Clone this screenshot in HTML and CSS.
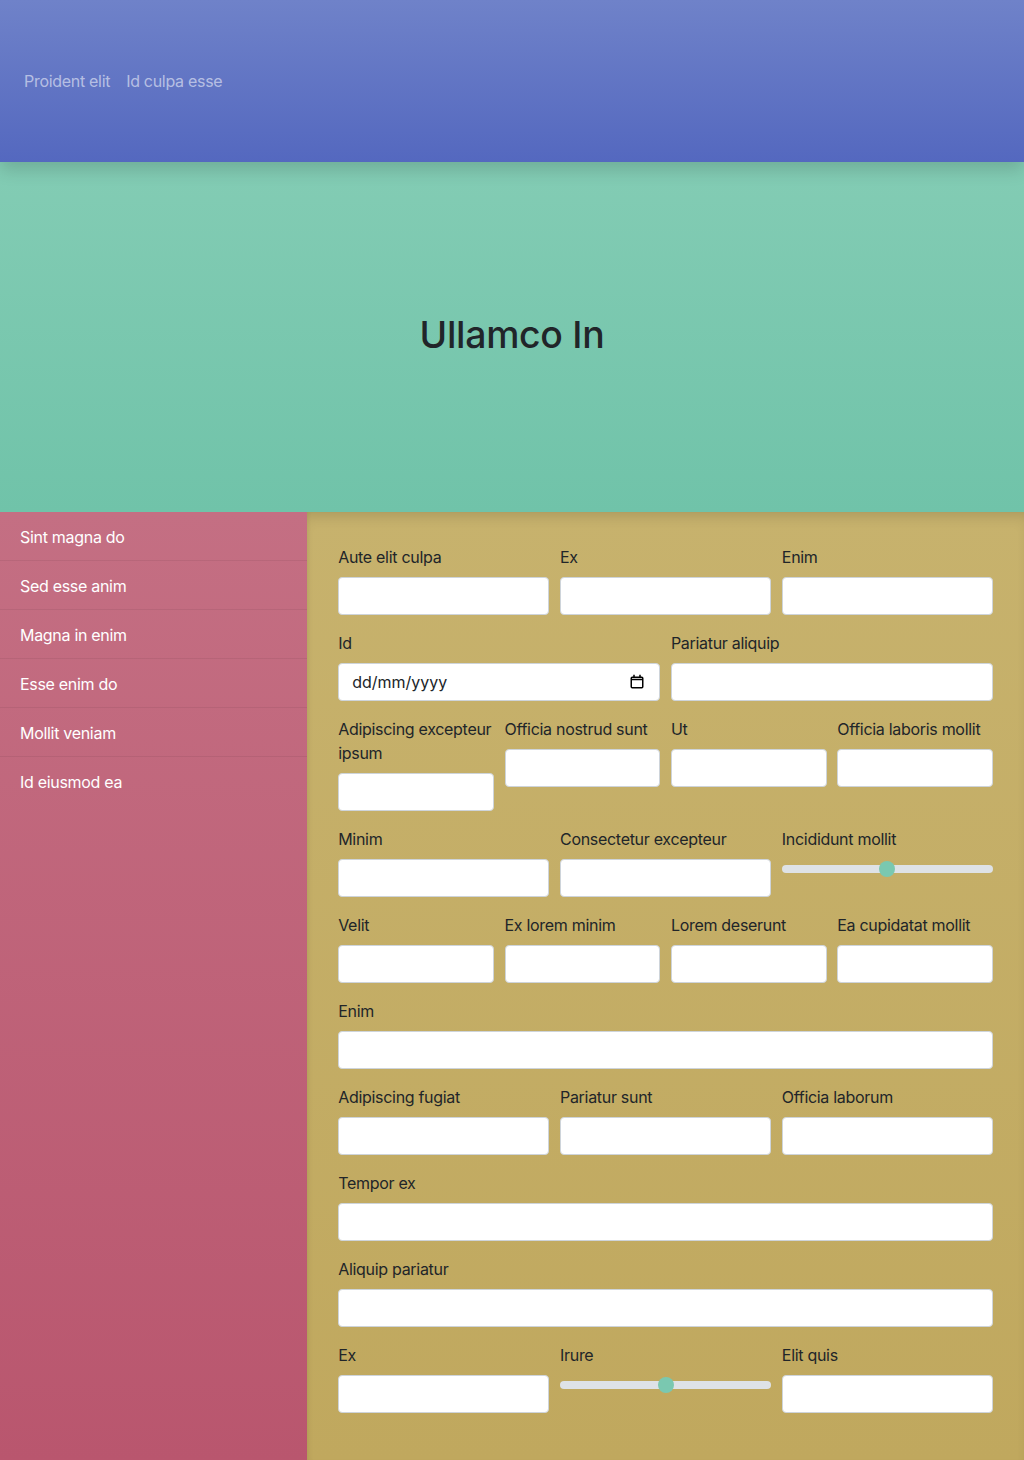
FILE: index.html
```html
<!DOCTYPE html>
<html lang="en">
<head>
<meta charset="utf-8">
<title>Ullamco In</title>
<link rel="stylesheet" href="styles.css">
</head>
<body>
<header class="topbar">
  <nav class="nav">
    <a class="nav-link" href="#">Proident elit</a>
    <a class="nav-link" href="#">Id culpa esse</a>
  </nav>
</header>
<section class="hero">
  <h1 class="hero-title">Ullamco In</h1>
</section>
<div class="layout">
  <aside class="sidebar">
    <a class="side-item" href="#">Sint magna do</a>
    <a class="side-item" href="#">Sed esse anim</a>
    <a class="side-item" href="#">Magna in enim</a>
    <a class="side-item" href="#">Esse enim do</a>
    <a class="side-item" href="#">Mollit veniam</a>
    <a class="side-item" href="#">Id eiusmod ea</a>
  </aside>
  <main class="main">
    <form class="form">
      <div class="row cols-3">
        <div class="field"><label>Aute elit culpa</label><input class="control" type="text"></div>
        <div class="field"><label>Ex</label><input class="control" type="text"></div>
        <div class="field"><label>Enim</label><input class="control" type="text"></div>
      </div>
      <div class="row cols-2">
        <div class="field"><label>Id</label>
          <div class="date-wrap">
            <input class="control date" type="text" placeholder="dd/mm/yyyy">
            <svg class="cal-icon" width="14" height="15" viewBox="0 0 14 15"><rect x="1.25" y="3.25" width="11.5" height="10.5" rx="1" fill="none" stroke="#000" stroke-width="1.5"/><path d="M1.5 5.5h11" stroke="#000" stroke-width="1.5"/><path d="M4 0.8v3 M10 0.8v3" stroke="#000" stroke-width="1.5"/></svg>
          </div>
        </div>
        <div class="field"><label>Pariatur aliquip</label><input class="control" type="text"></div>
      </div>
      <div class="row cols-4">
        <div class="field"><label>Adipiscing excepteur ipsum</label><input class="control" type="text"></div>
        <div class="field"><label>Officia nostrud sunt</label><input class="control" type="text"></div>
        <div class="field"><label>Ut</label><input class="control" type="text"></div>
        <div class="field"><label>Officia laboris mollit</label><input class="control" type="text"></div>
      </div>
      <div class="row cols-3">
        <div class="field"><label>Minim</label><input class="control" type="text"></div>
        <div class="field"><label>Consectetur excepteur</label><input class="control" type="text"></div>
        <div class="field"><label>Incididunt mollit</label><input class="range" type="range" min="0" max="100" value="50"></div>
      </div>
      <div class="row cols-4">
        <div class="field"><label>Velit</label><input class="control" type="text"></div>
        <div class="field"><label>Ex lorem minim</label><input class="control" type="text"></div>
        <div class="field"><label>Lorem deserunt</label><input class="control" type="text"></div>
        <div class="field"><label>Ea cupidatat mollit</label><input class="control" type="text"></div>
      </div>
      <div class="row cols-1">
        <div class="field"><label>Enim</label><input class="control" type="text"></div>
      </div>
      <div class="row cols-3">
        <div class="field"><label>Adipiscing fugiat</label><input class="control" type="text"></div>
        <div class="field"><label>Pariatur sunt</label><input class="control" type="text"></div>
        <div class="field"><label>Officia laborum</label><input class="control" type="text"></div>
      </div>
      <div class="row cols-1">
        <div class="field"><label>Tempor ex</label><input class="control" type="text"></div>
      </div>
      <div class="row cols-1">
        <div class="field"><label>Aliquip pariatur</label><input class="control" type="text"></div>
      </div>
      <div class="row cols-3">
        <div class="field"><label>Ex</label><input class="control" type="text"></div>
        <div class="field"><label>Irure</label><input class="range" type="range" min="0" max="100" value="50"></div>
        <div class="field"><label>Elit quis</label><input class="control" type="text"></div>
      </div>
    </form>
  </main>
</div>
</body>
</html>
```

FILE: styles.css
```css
* { box-sizing: border-box; }
html, body { margin: 0; padding: 0; }
body {
  font-family: Inter, "Liberation Sans", sans-serif;
  font-size: 16px;
  line-height: 1.5;
  letter-spacing: -0.3px;
  color: #212529;
  background: #c0a85e;
}
.topbar {
  position: relative;
  z-index: 2;
  height: 162px;
  display: flex;
  align-items: center;
  padding: 0 16px;
  background: linear-gradient(180deg, #6f82c9 0%, #5468bf 100%);
  box-shadow: 0 8px 16px rgba(0,0,0,.15);
}
.nav { display: flex; }
.nav-link {
  padding: 8px 8px;
  color: rgba(255,255,255,.55);
  text-decoration: none;
  font-size: 16px;
}
.hero {
  position: relative;
  z-index: 1;
  height: 350px;
  display: flex;
  align-items: center;
  justify-content: center;
  padding-bottom: 3px;
  background: linear-gradient(180deg, #83ccb4 0%, #70c3a9 100%);
}
.hero-title {
  margin: 0;
  font-size: 37.4px;
  font-weight: 500;
  line-height: 1.2;
  color: #212529;
  letter-spacing: -0.3px;
}
.layout {
  display: flex;
  min-height: 948px;
}
.sidebar {
  width: 30%;
  flex: none;
  display: flex;
  flex-direction: column;
  background: linear-gradient(180deg, #c46f83 0%, #b9566e 100%);
}
.side-item {
  display: block;
  padding: 13px 20px 11px;
  color: #fff;
  text-decoration: none;
  border-bottom: 1px solid rgba(0,0,0,.06);
}
.side-item:last-child { border-bottom: none; }
.main {
  flex: 1;
  padding: 33px 31px 32px;
  background: linear-gradient(180deg, #c7b26d 0%, #c0a85e 100%);
  box-shadow: inset 0 10px 14px -6px rgba(0,0,0,.14), inset 3px 0 4px -2px rgba(0,0,0,.06);
}
.form { display: flex; flex-direction: column; gap: 16px; }
.row {
  display: grid;
  column-gap: 10.67px;
  align-items: start;
}
.cols-1 { grid-template-columns: 1fr; }
.cols-2 { grid-template-columns: repeat(2, 1fr); }
.cols-3 { grid-template-columns: repeat(3, 1fr); }
.cols-4 { grid-template-columns: repeat(4, 1fr); }
.field { display: flex; flex-direction: column; min-width: 0; }
.field label { margin-bottom: 8px; }
.control {
  display: block;
  width: 100%;
  height: 38px;
  padding: 6px 12px;
  font: inherit;
  color: #212529;
  background: #fff;
  border: 1px solid #ced4da;
  border-radius: 4px;
  outline: none;
}
.date-wrap { position: relative; }
.date { padding-left: 13px; }
.date::placeholder { color: #212529; opacity: 1; }
.cal-icon { position: absolute; right: 16px; top: 11px; }
.range {
  -webkit-appearance: none;
  appearance: none;
  width: 100%;
  height: 20px;
  margin: 0;
  padding: 0;
  background: transparent;
}
.range::-webkit-slider-runnable-track {
  height: 8px;
  background: #dee2e6;
  border-radius: 4px;
}
.range::-webkit-slider-thumb {
  -webkit-appearance: none;
  appearance: none;
  width: 16px;
  height: 16px;
  margin-top: -4px;
  border-radius: 50%;
  background: #7ac8b0;
  border: 0;
}
```
